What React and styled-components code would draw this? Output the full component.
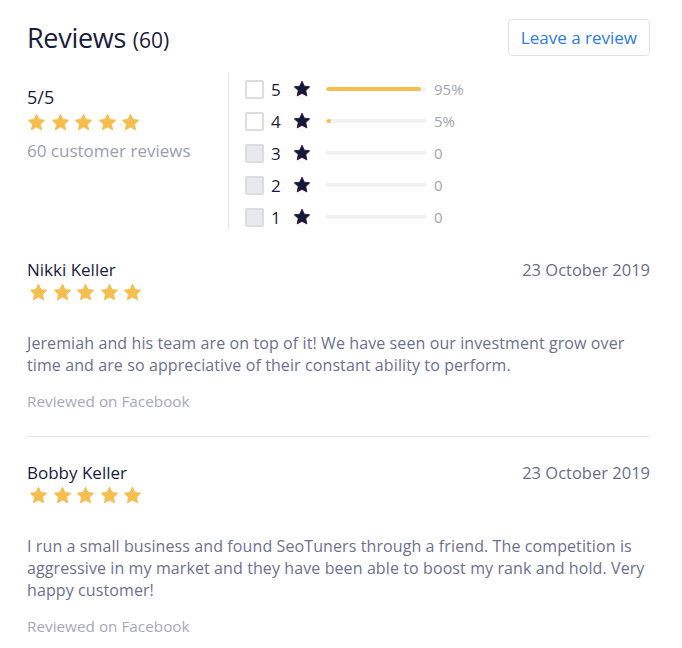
import React from "react";
import styled, { createGlobalStyle } from "styled-components";

const Global = createGlobalStyle`
  html, body { margin: 0; padding: 0; background: #fff; }
  body { font-family: "Open Sans", "Noto Sans", sans-serif; -webkit-font-smoothing: antialiased; }
  * { box-sizing: border-box; }
`;

const Page = styled.div`
  width: 682px;
  padding: 19px 32px 0 27px;
`;

const Header = styled.div`
  display: flex;
  justify-content: space-between;
  align-items: center;
`;

const Title = styled.h1`
  margin: 0;
  font-size: 27px;
  font-weight: 500;
  color: #1a1c3c;
  letter-spacing: -0.3px;
  span { font-size: 21px; font-weight: 400; letter-spacing: 0; }
`;

const Button = styled.button`
  height: 37px;
  padding: 0 12px;
  border: 1px solid #e1e2e8;
  border-radius: 4px;
  background: #fff;
  color: #2d7ce0;
  font-family: inherit;
  font-size: 17px;
  cursor: pointer;
`;

const Summary = styled.div`
  display: flex;
  margin-top: 17px;
`;

const Overall = styled.div`
  width: 202px;
  padding-top: 13px;
  border-right: 1px solid #e6e7ec;
`;

const Score = styled.div`
  font-size: 18px;
  color: #1a1c3c;
  line-height: 22px;
`;

const Stars = styled.div`
  display: flex;
  gap: ${p => p.$gap || 5}px;
  margin-top: ${p => p.$mt || 0}px;
  margin-left: ${p => p.$ml || 0}px;
`;

const Muted = styled.div`
  font-size: 17px;
  color: #9b9db0;
  margin-top: 7px;
`;

const Breakdown = styled.div`
  display: flex;
  flex-direction: column;
  padding: 7px 0 4px 16px;
  gap: 14px;
`;

const Row = styled.div`
  display: flex;
  align-items: center;
  height: 18px;
`;

const Check = styled.div`
  width: 19px;
  height: 19px;
  border-radius: 2px;
  border: 2px solid #dcdde3;
  background: ${p => (p.$disabled ? "#e8e9ee" : "#fff")};
`;

const Num = styled.span`
  width: 22px;
  margin-left: 7px;
  font-size: 17px;
  color: #1a1c3c;
`;

const Track = styled.div`
  width: 100px;
  height: 4px;
  margin-left: 15px;
  background: #f1f1f3;
  border-radius: 2px;
  overflow: hidden;
`;

const Fill = styled.div`
  height: 100%;
  background: #f5bf52;
  border-radius: 2px;
`;

const Pct = styled.span`
  margin-left: 8px;
  font-size: 15px;
  color: #a3a5b5;
`;

const Review = styled.div`
  padding: ${p => (p.$first ? "28px" : "24px")} 0 ${p => (p.$first ? "25px" : "0")};
  border-bottom: ${p => (p.$first ? "1px solid #e6e7ec" : "none")};
`;

const ReviewHead = styled.div`
  display: flex;
  justify-content: space-between;
  align-items: baseline;
`;

const Name = styled.div`
  font-size: 17px;
  color: #1a1c3c;
`;

const DateText = styled.div`
  font-size: 16.5px;
  color: #6d6e87;
`;

const Body = styled.p`
  margin: 30px 0 0;
  font-size: 16px;
  letter-spacing: 0.1px;
  line-height: 22px;
  color: #6e7090;
`;

const Source = styled.div`
  margin-top: 15px;
  font-size: 15.3px;
  color: #a8a9b7;
`;

const Star = ({ size = 19, color = "#f6be4f" }) => (
  <svg width={size} height={size} viewBox="0 0 24 24">
    <path
      d="M12 1.6l3.1 6.6 7.2.9-5.3 5 1.4 7.1L12 17.7l-6.4 3.5L7 14.1l-5.3-5 7.2-.9z"
      fill={color}
      stroke={color}
      strokeWidth="1.2"
      strokeLinejoin="round"
    />
  </svg>
);

const FiveStars = ({ mt, gap, ml }) => (
  <Stars $mt={mt} $gap={gap} $ml={ml}>
    {[0, 1, 2, 3, 4].map(i => <Star key={i} />)}
  </Stars>
);

const rows = [
  { n: 5, pct: 95, label: "95%" },
  { n: 4, pct: 5, label: "5%" },
  { n: 3, pct: 0, label: "0", disabled: true },
  { n: 2, pct: 0, label: "0", disabled: true },
  { n: 1, pct: 0, label: "0", disabled: true },
];

const reviews = [
  {
    name: "Nikki Keller",
    date: "23 October 2019",
    text: "Jeremiah and his team are on top of it! We have seen our investment grow over time and are so appreciative of their constant ability to perform.",
  },
  {
    name: "Bobby Keller",
    date: "23 October 2019",
    text: "I run a small business and found SeoTuners through a friend. The competition is aggressive in my market and they have been able to boost my rank and hold. Very happy customer!",
  },
];

export default function App() {
  return (
    <Page>
      <Global />
      <Header>
        <Title>Reviews <span>(60)</span></Title>
        <Button>Leave a review</Button>
      </Header>
      <Summary>
        <Overall>
          <Score>5/5</Score>
          <FiveStars mt={5} gap={4.5} />
          <Muted>60 customer reviews</Muted>
        </Overall>
        <Breakdown>
          {rows.map(r => (
            <Row key={r.n}>
              <Check $disabled={r.disabled} />
              <Num>{r.n}</Num>
              <Star size={18} color="#16183a" />
              <Track>
                <Fill style={{ width: `${r.pct}%` }} />
              </Track>
              <Pct>{r.label}</Pct>
            </Row>
          ))}
        </Breakdown>
      </Summary>
      {reviews.map((r, i) => (
        <Review key={r.name} $first={i === 0}>
          <ReviewHead>
            <Name>{r.name}</Name>
            <DateText>{r.date}</DateText>
          </ReviewHead>
          <FiveStars mt={2} gap={4.5} ml={2} />
          <Body>{r.text}</Body>
          <Source>Reviewed on Facebook</Source>
        </Review>
      ))}
    </Page>
  );
}
